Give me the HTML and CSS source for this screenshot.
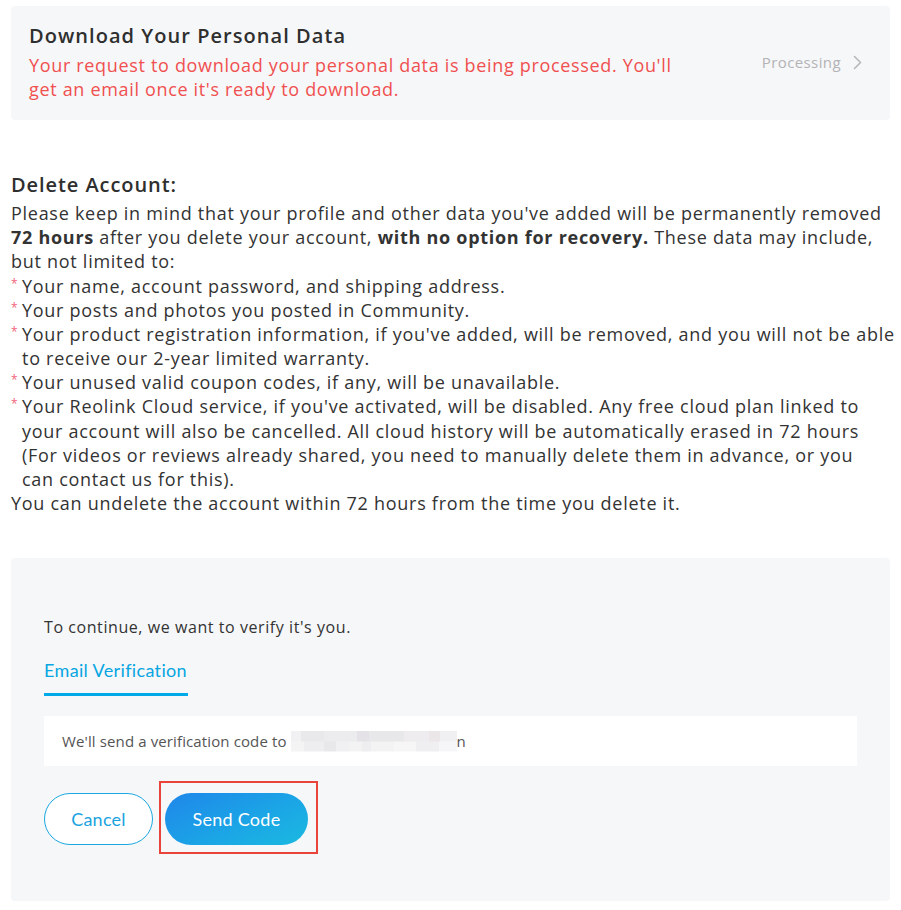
FILE: index.html
```html
<!DOCTYPE html>
<html lang="en">
<head>
<meta charset="utf-8">
<title>Account</title>
<link rel="stylesheet" href="styles.css">
</head>
<body>
<div class="page">
  <section class="card download">
    <div class="download-text">
      <h2 class="download-title">Download Your Personal Data</h2>
      <p class="download-msg">Your request to download your personal data is being processed. You'll<br>get an email once it's ready to download.</p>
    </div>
    <div class="status">
      <span>Processing</span>
      <svg class="chev" width="9" height="15" viewBox="0 0 9 15"><path d="M1.5 1.5 L7.5 7.5 L1.5 13.5" fill="none" stroke="#b8b8bc" stroke-width="1.6" stroke-linecap="round" stroke-linejoin="round"/></svg>
    </div>
  </section>

  <section class="delete">
    <h3 class="delete-title">Delete Account:</h3>
    <p class="line">Please keep in mind that your profile and other data you've added will be permanently removed</p>
    <p class="line"><b>72 hours</b> after you delete your account, <b>with no option for recovery.</b> These data may include,</p>
    <p class="line">but not limited to:</p>
    <ul class="items">
      <li><span class="star">*</span><span class="item-text">Your name, account password, and shipping address.</span></li>
      <li><span class="star">*</span><span class="item-text">Your posts and photos you posted in Community.</span></li>
      <li><span class="star">*</span><span class="item-text">Your product registration information, if you've added, will be removed, and you will not be able<br>to receive our 2-year limited warranty.</span></li>
      <li><span class="star">*</span><span class="item-text">Your unused valid coupon codes, if any, will be unavailable.</span></li>
      <li><span class="star">*</span><span class="item-text">Your Reolink Cloud service, if you've activated, will be disabled. Any free cloud plan linked to<br>your account will also be cancelled. All cloud history will be automatically erased in 72 hours<br>(For videos or reviews already shared, you need to manually delete them in advance, or you<br>can contact us for this).</span></li>
    </ul>
    <p class="line">You can undelete the account within 72 hours from the time you delete it.</p>
  </section>

  <section class="card verify">
    <p class="verify-lead">To continue, we want to verify it's you.</p>
    <div class="tabs">
      <span class="tab">Email Verification</span>
    </div>
    <div class="send-box">
      <span>We'll send a verification code to</span>
      <span class="blur"></span><span class="tail">n</span>
    </div>
    <div class="actions">
      <button class="btn btn-cancel">Cancel</button>
      <div class="highlight">
        <button class="btn btn-send">Send Code</button>
      </div>
    </div>
  </section>
</div>
</body>
</html>
```

FILE: styles.css
```css
* { box-sizing: border-box; }
html, body { margin: 0; padding: 0; background: #fff; }
body {
  font-family: "Open Sans", "Noto Sans", sans-serif;
  color: #333;
}
.page {
  padding: 6px 11px 0 11px;
  width: 901px;
}
.card {
  background: #f6f7f9;
  border-radius: 4px;
}
.download {
  height: 114px;
  display: flex;
  align-items: center;
  justify-content: space-between;
  padding: 0 28px 2px 18px;
}
.download-title {
  margin: 0;
  font-size: 20px;
  line-height: 24px;
  font-weight: 600;
  color: #2f2f2f;
  letter-spacing: 1.05px;
}
.download-msg {
  margin: 5px 0 0;
  font-size: 18px;
  line-height: 24px;
  color: #f0504f;
  letter-spacing: 0.67px;
}
.status {
  display: flex;
  align-items: center;
  gap: 12px;
  color: #b3b3b6;
  font-size: 15px;
  letter-spacing: 0.4px;
}
.chev { display: block; }

.delete {
  padding-top: 49px;
  font-size: 18px;
  line-height: 24.17px;
  color: #333;
  letter-spacing: 0.72px;
}
.delete-title {
  margin: 0;
  font-size: 20px;
  line-height: 32px;
  font-weight: 600;
  color: #2f2f2f;
  letter-spacing: 0.93px;
}
.line { margin: 0; white-space: nowrap; }
.line b { font-weight: 700; }
.items { list-style: none; margin: 0; padding: 0; }
.items li { display: flex; white-space: nowrap; }
.star {
  width: 11px;
  flex: none;
  color: #f0637a;
  font-size: 12px;
  line-height: 20px;
}
.verify {
  margin-top: 43px;
  padding: 58px 33px 56px;
}
.verify-lead {
  margin: 0;
  font-size: 16px;
  line-height: 22px;
  color: #333;
  letter-spacing: 0.57px;
}
.tabs {
  margin-top: 21px;
  display: flex;
}
.tab {
  display: block;
  width: 144px;
  font-family: Lato, "Open Sans", sans-serif;
  font-size: 18px;
  line-height: 22px;
  color: #06a6e2;
  padding-bottom: 12px;
  border-bottom: 3px solid #00aae8;
  white-space: nowrap;
  letter-spacing: 0.35px;
}
.send-box {
  margin-top: 20px;
  height: 50px;
  background: #fff;
  display: flex;
  align-items: center;
  padding-left: 18px;
  font-size: 15px;
  color: #555;
  letter-spacing: 0.12px;
  width: 813px;
}
.blur {
  display: inline-block;
  width: 166px;
  height: 21px;
  margin-left: 4px;
  background:
    linear-gradient(90deg, #f1f1f3 0 6%, #e9e9ec 6% 20%, #ececee 20% 40%, #e4e2e6 40% 47%, #e8e8eb 47% 68%, #eeecee 68% 83%, #ebe7e9 83% 90%, #f0f0f3 90%) top / 100% 50% no-repeat,
    linear-gradient(90deg, #f4f4f5 0 8%, #eeeef0 8% 20%, #e8e8ea 20% 27%, #f0f0f2 27% 35%, #f3f3f3 35% 43%, #eeeef1 43% 48%, #f3f3f3 48% 62%, #f6f6f6 62% 75%, #efeef1 75% 89%, #f6f6f8 89%) bottom / 100% 50% no-repeat;
}
.tail { color: #555; }
.actions {
  margin-top: 27px;
  display: flex;
  align-items: center;
  gap: 12px;
}
.btn {
  height: 52px;
  border-radius: 26px;
  font-family: Lato, "Open Sans", sans-serif;
  font-size: 18px;
  letter-spacing: 0.25px;
  cursor: pointer;
}
.btn-cancel {
  width: 109px;
  background: #fff;
  border: 1px solid #1aa8e2;
  color: #1aa3df;
}
.btn-send {
  width: 143px;
  border: none;
  color: #fff;
  background: linear-gradient(155deg, #1f86ea 0%, #1ba4e6 55%, #1bbae0 100%);
  display: block;
}
.highlight {
  position: relative;
}
.highlight::after {
  content: "";
  position: absolute;
  left: -6px;
  top: -12px;
  right: -10px;
  bottom: -9px;
  border: 2px solid #e8443c;
  pointer-events: none;
}
```
